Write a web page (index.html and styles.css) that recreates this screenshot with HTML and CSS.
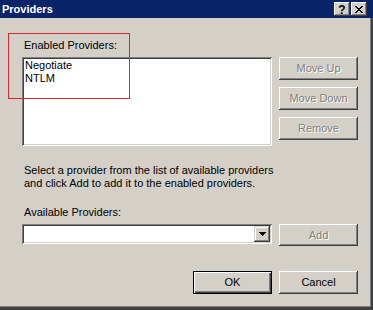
FILE: index.html
```html
<!DOCTYPE html>
<html>
<head>
<meta charset="utf-8">
<title>Providers</title>
<link rel="stylesheet" href="styles.css">
</head>
<body>
<div class="window">
  <div class="titlebar">
    <span class="title">Providers</span>
    <div class="caption-btns">
      <div class="cap-btn help">?</div>
      <div class="cap-btn close">
        <svg width="8" height="7" viewBox="0 0 8 7" shape-rendering="crispEdges">
          <path d="M0 0h2v1H0zM6 0h2v1H6zM1 1h2v1H1zM5 1h2v1H5zM2 2h4v1H2zM3 3h2v1H3zM2 4h4v1H2zM1 5h2v1H1zM5 5h2v1H5zM0 6h2v1H0zM6 6h2v1H6z" fill="#000"/>
        </svg>
      </div>
    </div>
  </div>
  <div class="client">
    <div class="label">Enabled Providers:</div>
    <div class="list-row">
      <div class="listbox">
        <div class="item">Negotiate</div>
        <div class="item">NTLM</div>
      </div>
      <div class="side-btns">
        <div class="btn disabled">Move Up</div>
        <div class="btn disabled">Move Down</div>
        <div class="btn disabled">Remove</div>
      </div>
    </div>
    <p class="hint">Select a provider from the list of available providers<br>and click Add to add it to the enabled providers.</p>
    <div class="label label-avail">Available Providers:</div>
    <div class="combo-row">
      <div class="combo">
        <div class="combo-field"></div>
        <div class="combo-btn">
          <svg width="7" height="4" viewBox="0 0 7 4" shape-rendering="crispEdges">
            <path d="M0 0h7v1H0zM1 1h5v1H1zM2 2h3v1H2zM3 3h1v1H3z" fill="#000"/>
          </svg>
        </div>
      </div>
      <div class="btn disabled add">Add</div>
    </div>
    <div class="footer">
      <div class="btn default">OK</div>
      <div class="btn">Cancel</div>
    </div>
  </div>
  <div class="annot"></div>
</div>
</body>
</html>
```

FILE: styles.css
```css
html, body {
  margin: 0;
  padding: 0;
}
body {
  width: 373px;
  height: 310px;
  overflow: hidden;
  background: #d4d0c8;
  font-family: "Liberation Sans", Arial, sans-serif;
  font-size: 11px;
  line-height: 13px;
  color: #000;
}
.window {
  position: relative;
  width: 373px;
  height: 310px;
  display: flex;
  flex-direction: column;
}
.titlebar {
  height: 18px;
  flex: none;
  background: #0a246a;
  display: flex;
  align-items: center;
  justify-content: space-between;
  padding-left: 2px;
}
.title {
  color: #fff;
  font-weight: bold;
  line-height: 18px;
}
.caption-btns {
  display: flex;
  gap: 1px;
  margin-right: 6px;
}
.cap-btn {
  width: 16px;
  height: 14px;
  background: #d4d0c8;
  box-shadow: inset -1px -1px #404040, inset 1px 1px #fff, inset -2px -2px #808080;
  display: flex;
  align-items: center;
  justify-content: center;
  box-sizing: border-box;
}
.cap-btn.help {
  font-weight: bold;
  font-size: 12px;
  line-height: 14px;
  padding-top: 1px;
}
.cap-btn.close svg {
  display: block;
  margin-top: 1px;
}
.client {
  flex: 1;
  border-right: 2px solid #404040;
  border-bottom: 3px solid #404040;
  box-shadow: inset -1px -1px #808080;
  padding: 21px 13px 0 22px;
  display: flex;
  flex-direction: column;
}
.label {
  padding-left: 2px;
}
.list-row {
  display: flex;
  gap: 7px;
  margin-top: 5px;
}
.listbox {
  width: 250px;
  height: 89px;
  box-sizing: border-box;
  background: #fff;
  box-shadow: inset 1px 1px #808080, inset -1px -1px #fff, inset 2px 2px #404040, inset -2px -2px #d4d0c8;
  padding: 2px 3px;
}
.side-btns {
  display: flex;
  flex-direction: column;
  gap: 7px;
}
.btn {
  width: 79px;
  height: 23px;
  box-sizing: border-box;
  background: #d4d0c8;
  box-shadow: inset -1px -1px #404040, inset 1px 1px #fff, inset -2px -2px #808080;
  display: flex;
  align-items: center;
  justify-content: center;
}
.btn.disabled {
  color: #808080;
  text-shadow: 1px 1px 0 #fff;
}
.btn.default {
  box-shadow: inset 1px 1px #000, inset -1px -1px #000, inset 2px 2px #fff, inset -2px -2px #404040, inset -3px -3px #808080;
}
.hint {
  margin: 18px 0 0;
  padding-left: 2px;
}
.label-avail {
  margin-top: 16px;
}
.combo-row {
  display: flex;
  gap: 7px;
  margin-top: 5px;
  align-items: flex-start;
}
.combo {
  width: 250px;
  height: 20px;
  box-sizing: border-box;
  background: #fff;
  box-shadow: inset 1px 1px #808080, inset -1px -1px #fff, inset 2px 2px #404040, inset -2px -2px #d4d0c8;
  padding: 2px;
  display: flex;
}
.combo-field {
  flex: 1;
}
.combo-btn {
  width: 16px;
  height: 16px;
  box-sizing: border-box;
  background: #d4d0c8;
  box-shadow: inset -1px -1px #404040, inset 1px 1px #d4d0c8, inset -2px -2px #808080, inset 2px 2px #fff;
  display: flex;
  align-items: center;
  justify-content: center;
}
.combo-btn svg {
  display: block;
}
.add {
  height: 22px;
}
.footer {
  display: flex;
  justify-content: flex-end;
  gap: 7px;
  margin-top: 25px;
}
.annot {
  position: absolute;
  left: 8px;
  top: 33px;
  width: 122px;
  height: 66px;
  box-sizing: border-box;
  border: 1px solid #e0262d;
}
```
